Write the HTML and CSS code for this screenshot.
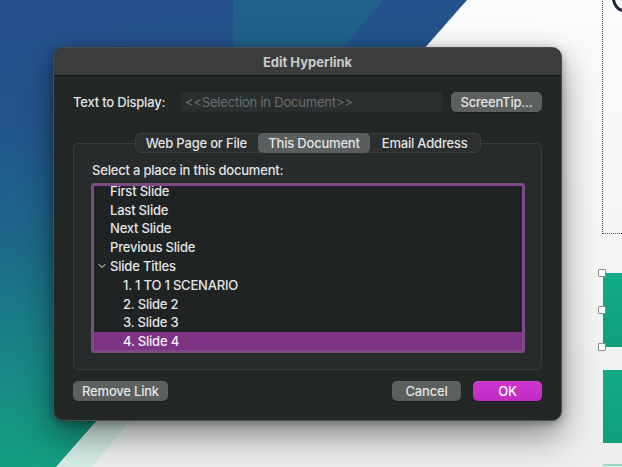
FILE: index.html
```html
<!DOCTYPE html>
<html lang="en">
<head>
<meta charset="utf-8">
<title>Edit Hyperlink</title>
<link rel="stylesheet" href="styles.css">
</head>
<body>
<div class="screen">
  <div class="bg-left"></div>
  <div class="bg-band"></div>
  <div class="bg-pale"></div>
  <div class="slide-frame"></div>
  <div class="slide-ring"></div>
  <div class="green g1"></div>
  <div class="green g2"></div>
  <div class="green-line"></div>
  <div class="handle ha"></div>
  <div class="handle hb"></div>
  <div class="handle hc"></div>

  <div class="dialog">
    <div class="titlebar">Edit Hyperlink</div>
    <div class="dialog-body">
      <div class="display-row">
        <span class="label">Text to Display:</span>
        <div class="input">&lt;&lt;Selection in Document&gt;&gt;</div>
        <button class="btn btn-tip">ScreenTip...</button>
      </div>

      <div class="tabs">
        <span class="tab tab-web">Web Page or File</span>
        <span class="tab tab-doc active">This Document</span>
        <span class="tab tab-mail">Email Address</span>
      </div>

      <div class="group">
        <div class="group-label">Select a place in this document:</div>
        <div class="list">
          <div class="item lvl1 first">First Slide</div>
          <div class="item lvl1">Last Slide</div>
          <div class="item lvl1">Next Slide</div>
          <div class="item lvl1">Previous Slide</div>
          <div class="item parent"><svg class="chev" width="8" height="6" viewBox="0 0 8 6"><path d="M1 1.5 L4 4.5 L7 1.5" fill="none" stroke="#9a9d9d" stroke-width="1.1" stroke-linecap="round" stroke-linejoin="round"/></svg>Slide Titles</div>
          <div class="item lvl2">1. 1 TO 1 SCENARIO</div>
          <div class="item lvl2">2. Slide 2</div>
          <div class="item lvl2">3. Slide 3</div>
          <div class="item lvl2 selected">4. Slide 4</div>
        </div>
      </div>

      <div class="footer">
        <button class="btn btn-remove">Remove Link</button>
        <button class="btn btn-cancel">Cancel</button>
        <button class="btn btn-ok">OK</button>
      </div>
    </div>
  </div>
</div>
</body>
</html>
```

FILE: styles.css
```css
* { box-sizing: border-box; }

html, body {
  margin: 0;
  padding: 0;
}

body {
  width: 622px;
  height: 467px;
  overflow: hidden;
  font-family: "Inter", "Noto Sans", "Liberation Sans", sans-serif;
  font-size: 13px;
  font-weight: 500;
  letter-spacing: -0.2px;
}

.screen {
  position: relative;
  width: 622px;
  height: 467px;
  overflow: hidden;
  background: linear-gradient(180deg, #fbfbfb 0%, #f3f4f4 60%, #eceeee 100%);
}

/* ---------- background canvas ---------- */
.bg-left {
  position: absolute;
  inset: 0;
  clip-path: polygon(0 0, 467px 0, 56px 467px, 0 467px);
  background: linear-gradient(172deg, #25508c 0%, #23548c 22%, #1d6a8a 45%, #188a86 68%, #12a282 88%, #14a482 100%);
}

.bg-band {
  position: absolute;
  inset: 0;
  clip-path: polygon(233px 0, 383px 0, 300px 100px, 233px 100px);
  background: #1f6189;
}

.bg-pale {
  position: absolute;
  inset: 0;
  clip-path: polygon(100px 420px, 130px 420px, 92px 467px, 57px 467px);
  background: linear-gradient(180deg, rgba(140, 205, 190, 0.25), rgba(200, 235, 225, 0.7));
}

.slide-frame {
  position: absolute;
  left: 602px;
  top: -4px;
  width: 40px;
  height: 238px;
  border-left: 1px dotted #4a4a4a;
  border-bottom: 1px dotted #4a4a4a;
}

.slide-ring {
  position: absolute;
  left: 612px;
  top: -16px;
  width: 24px;
  height: 28px;
  border: 3px solid #1b2442;
  border-radius: 50%;
}

.green {
  position: absolute;
  left: 603px;
  width: 25px;
  background: linear-gradient(180deg, #12ab85 0%, #0f9e7c 100%);
}
.g1 { top: 273px; height: 74px; }
.g2 { top: 370px; height: 73px; }

.green-line {
  position: absolute;
  left: 603px;
  top: 464px;
  width: 25px;
  height: 2px;
  background: #9ad8c8;
}

.handle {
  position: absolute;
  left: 598px;
  width: 8px;
  height: 8px;
  background: #fff;
  border: 1px solid #8c8c8c;
  border-radius: 1px;
}
.ha { top: 269px; }
.hb { top: 306px; }
.hc { top: 343px; }

/* ---------- dialog ---------- */
.dialog {
  position: absolute;
  left: 53px;
  top: 47px;
  width: 509px;
  display: flex;
  flex-direction: column;
  background: #232827;
  border: 1px solid #4b4e4e;
  border-radius: 10px;
  overflow: hidden;
  box-shadow: 0 14px 34px rgba(0, 0, 0, 0.45), 0 2px 8px rgba(0, 0, 0, 0.3);
}

.titlebar {
  height: 28px;
  flex: none;
  display: flex;
  align-items: center;
  justify-content: center;
  background: #3b3d3c;
  border-bottom: 1px solid #141716;
  color: #c9caca;
  font-weight: 700;
  font-size: 13px;
  letter-spacing: 0;
  padding-top: 1px;
}

.dialog-body {
  display: flex;
  flex-direction: column;
  padding: 16px 19px 19px 19px;
}

.display-row {
  display: flex;
  align-items: center;
  height: 20px;
}

.label {
  width: 108px;
  flex: none;
  color: #e2e3e3;
}

.input {
  width: 261px;
  height: 20px;
  flex: none;
  display: flex;
  align-items: center;
  padding-left: 4px;
  background: #2a2e2e;
  color: #6a6e6e;
  font-weight: 400;
  border-radius: 1px;
}

.btn {
  font-family: inherit;
  font-size: 13px;
  font-weight: 500;
  letter-spacing: -0.2px;
  height: 20px;
  border: none;
  border-radius: 5px;
  background: #5b5f5e;
  color: #e4e5e5;
  padding: 0;
  display: flex;
  align-items: center;
  justify-content: center;
  box-shadow: 0 0.5px 0 rgba(255, 255, 255, 0.08) inset, 0 1px 1px rgba(0, 0, 0, 0.3);
}

.btn-tip {
  width: 91px;
  margin-left: 9px;
}

/* tabs */
.tabs {
  position: relative;
  z-index: 2;
  align-self: center;
  margin-top: 21px;
  display: flex;
  height: 20px;
  width: 346px;
  background: #2b2f2f;
  border: 1px solid #3b3f3f;
  border-radius: 6px;
}

.tab {
  display: flex;
  align-items: center;
  justify-content: center;
  color: #e2e3e3;
  border-radius: 5px;
  margin-top: -1px;
  height: 20px;
}
.tab-web { width: 124px; margin-left: -1px; }
.tab-doc { width: 112px; }
.tab-mail { width: 110px; }
.tab.active { background: #5a5e5e; }

/* group box */
.group {
  margin-top: -10px;
  height: 227px;
  background: #272b2b;
  border: 1px solid #383c3c;
  border-radius: 5px;
  padding: 18px 16px 16px 17px;
  display: flex;
  flex-direction: column;
}

.group-label {
  height: 16px;
  line-height: 16px;
  color: #e2e3e3;
  padding-left: 1px;
}

.list {
  margin-top: 5px;
  height: 170px;
  background: #1f2323;
  border: 3px solid #7d4a86;
  border-radius: 3px;
  overflow: hidden;
  display: flex;
  flex-direction: column;
}

.item {
  height: 18.8px;
  flex: none;
  display: flex;
  align-items: center;
  color: #e4e5e5;
  white-space: nowrap;
}
.item.first { margin-top: -4.6px; }
.lvl1 { padding-left: 16px; }
.lvl2 { padding-left: 29px; }
.parent { padding-left: 4px; }
.chev { margin-right: 4px; flex: none; }
.item.selected { background: #7e3384; color: #f2eef2; }

/* footer */
.footer {
  margin-top: 11px;
  display: flex;
  align-items: center;
}

.btn-remove { width: 95px; }
.btn-cancel { width: 69px; margin-left: auto; }
.btn-ok {
  width: 69px;
  margin-left: 12px;
  background: linear-gradient(180deg, #cc36cf 0%, #c12dc4 100%);
  color: #fff;
}
```
